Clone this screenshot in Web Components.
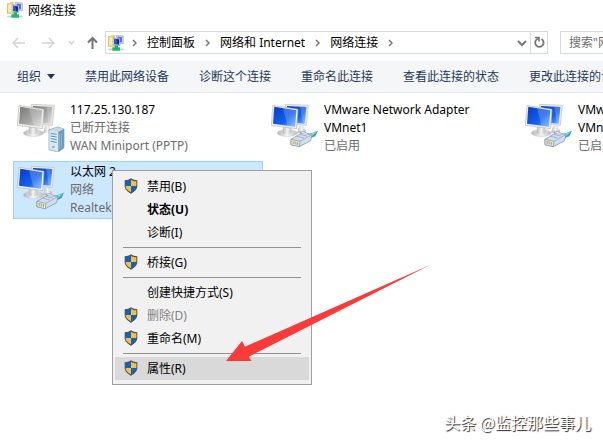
<!DOCTYPE html>
<html lang="zh-CN">
<head>
<meta charset="utf-8">
<title>网络连接</title>
<style>
    html, body {
        height: 100%;
        margin: 0;
    }
    body {
        background: #fff;
        color: #000;
        font: 12px/18px "Noto Sans", "Noto Sans CJK SC", sans-serif;
        overflow: hidden;
    }
</style>
</head>
<body>
<explorer-window>
    <title-bar>网络连接</title-bar>
    <nav-bar>
        <crumb-item>控制面板</crumb-item>
        <crumb-item>网络和 Internet</crumb-item>
        <crumb-item>网络连接</crumb-item>
    </nav-bar>
    <tool-bar>
        <tool-button menu>组织</tool-button>
        <tool-button>禁用此网络设备</tool-button>
        <tool-button>诊断这个连接</tool-button>
        <tool-button>重命名此连接</tool-button>
        <tool-button>查看此连接的状态</tool-button>
        <tool-button>更改此连接的设置</tool-button>
    </tool-bar>
    <connection-list>
        <connection-tile kind="wan" name="117.25.130.187" status="已断开连接" device="WAN Miniport (PPTP)"></connection-tile>
        <connection-tile name="VMware Network Adapter VMnet1" status="已启用"></connection-tile>
        <connection-tile name="VMware Network Adapter VMnet8" status="已启用"></connection-tile>
        <connection-tile selected name="以太网 2" status="网络" device="Realtek"></connection-tile>
    </connection-list>
    <context-menu slot="overlay">
        <menu-item shield>禁用(B)</menu-item>
        <menu-item default>状态(U)</menu-item>
        <menu-item>诊断(I)</menu-item>
        <menu-line></menu-line>
        <menu-item shield>桥接(G)</menu-item>
        <menu-line></menu-line>
        <menu-item>创建快捷方式(S)</menu-item>
        <menu-item shield disabled>删除(D)</menu-item>
        <menu-item shield>重命名(M)</menu-item>
        <menu-line></menu-line>
        <menu-item shield active>属性(R)</menu-item>
    </context-menu>
    <pointer-arrow slot="overlay"></pointer-arrow>
    <water-mark slot="overlay">头条 @监控那些事儿</water-mark>
</explorer-window>

<script>
const folderIcon = `
    <svg width="16" height="16" viewBox="0 0 48 48" aria-hidden="true">
        <path d="M1 5h6l3-3h9v32H1z" fill="#f4dc7c" stroke="#c8a84c" stroke-width="2"/>
        <path d="M4 8h12v23H4z" fill="#fbeeb0"/>
        <path d="M25 1l21 2v23l-18 1z" fill="#d9d9d4" stroke="#a9aaa6" stroke-width="2"/>
        <path d="M29 5l13 1v16l-13 1z" fill="#4a74e8"/>
        <path d="M15 8l20 3v21l-20-3z" fill="#e5e4dc" stroke="#969a9c" stroke-width="2"/>
        <path d="M18 11l15 2v16l-15-2z" fill="#1622a6"/>
        <path d="M18 11l7 1 3 16-10-1z" fill="#3558d8"/>
        <path d="M20 31h10v8H20z" fill="#18b45c"/>
        <path d="M1 41h46v5H1z" fill="#c9cdcf"/>
        <path d="M13 37h23v10H13z" fill="#12c063"/>
    </svg>`;

const shieldIcon = `
    <svg width="14" height="16" viewBox="0 0 42 48" aria-hidden="true">
        <path d="M21 1c5 4 12 6 19 6v17c0 10-8 17-19 23C10 41 2 34 2 24V7c7 0 14-2 19-6z" fill="#4d5660"/>
        <path d="M21 5v19H5V10c6 0 12-2 16-5z" fill="#0a63c9"/>
        <path d="M21 5c4 3 10 5 16 5v14H21z" fill="#ffbd3a"/>
        <path d="M5 24h16v19C11 38 5 32 5 24z" fill="#ffbd3a"/>
        <path d="M21 24h16c0 8-6 14-16 19z" fill="#0a63c9"/>
    </svg>`;

const plug = `
    <path d="M108 92l33-12-8 17-22 8z" fill="#2fa3cb"/>
    <path d="M112 92l26-10-15 14z" fill="#8ee1ee"/>
    <path d="M60 106l30-18 33 3-4 19-34 18-25-6z" fill="#d3deec" stroke="#7489a6" stroke-width="2"/>
    <path d="M60 106l27 6-2 16-25-6z" fill="#e9edf2" stroke="#7489a6" stroke-width="2"/>
    <path d="M64 111l18 4-1 8-16-4z" fill="#b5b060"/>
    <path d="M70 113v7M76 114v8" stroke="#fff3a8" stroke-width="2"/>
    <path d="M87 112l34-19M77 97l22 5M86 91l22 5" stroke="#8a9fbb" stroke-width="2"/>
    <path d="M92 88l-6-4 12-1 18 8" fill="#eef4fa" stroke="#7489a6" stroke-width="2"/>`;

const server = `
    <path d="M96 78l26-9 19 6v56l-17 13-28-7z" fill="#aac9dc" stroke="#7799af" stroke-width="2"/>
    <path d="M97 79l27 4v60l-27-7z" fill="#d8e9f2"/>
    <path d="M124 83l17-8v56l-17 12z" fill="#6c9aba"/>
    <path d="M97 79l25-9 18 5-16 8z" fill="#c3dae7"/>
    <path d="M101 88l18 3M101 96l18 3M101 104l18 3M101 112l18 3" stroke="#5c93b7" stroke-width="3"/>
    <path d="M128 91v44M134 87v43" stroke="#a7c9df" stroke-width="2"/>
    <circle cx="109" cy="129" r="4" fill="#88b7d2"/>`;

function computerIcon(kind) {
    const off = kind === 'wan';
    const id = off ? 'off' : 'on';
    const stops = off ? ['#777', '#a8a8a8', '#dcdcdc'] : ['#0838c8', '#1260ec', '#6fb4ff'];
    return `
        <svg width="48" height="48" viewBox="0 0 144 144" aria-hidden="true">
            <defs>
                <linearGradient id="${id}" x1="0" y1="0" x2="1" y2="1">
                    <stop offset="0" stop-color="${stops[0]}"/>
                    <stop offset=".6" stop-color="${stops[1]}"/>
                    <stop offset="1" stop-color="${stops[2]}"/>
                </linearGradient>
                <linearGradient id="base" x1="0" y1="0" x2="1" y2="0">
                    <stop offset="0" stop-color="#b4b4b4"/>
                    <stop offset=".5" stop-color="#f4f4f4"/>
                    <stop offset="1" stop-color="#bcbcbc"/>
                </linearGradient>
            </defs>
            <path d="M84 66l12-2 4 11c8 3 6 11-4 11l-18 2z" fill="url(#base)"/>
            <path d="M43 1l69 3-6 60-60-4z" fill="#ecebe8" stroke="#bdbcb8" stroke-width="2"/>
            <path d="M48 6l58 3-5 50-52-4z" fill="url(#${id})"/>
            <path d="M88 8l18 1-5 50-6-1z" fill="#fff" fill-opacity=".2"/>
            <ellipse cx="49" cy="87" rx="30" ry="11" fill="url(#base)" stroke="#c4c4c4" stroke-width="1"/>
            <path d="M36 66l24 3 2 17c-6 5-20 5-27 1z" fill="url(#base)"/>
            <path d="M6 4l75 12-4 58-76-10z" fill="#f3f2ef" stroke="#b4b3b0" stroke-width="2"/>
            <path d="M10 8l66 11-4 49-66-9z" fill="url(#${id})"/>
            <path d="M36 13l40 6-4 49-22-3z" fill="#fff" fill-opacity=".2"/>
            ${off ? server : plug}
        </svg>`;
}

class BaseElement extends HTMLElement {
    constructor() {
        super();
        this.attachShadow({ mode: 'open' });
    }

    connectedCallback() {
        this.shadowRoot.innerHTML = this.render();
    }
}

class ExplorerWindow extends BaseElement {
    render() {
        return `
            <style>
                :host {
                    display: flex;
                    flex-direction: column;
                    position: relative;
                    min-height: 100%;
                    overflow: hidden;
                }
            </style>
            <slot></slot>
            <slot name="overlay"></slot>
        `;
    }
}

class TitleBar extends BaseElement {
    render() {
        return `
            <style>
                :host {
                    display: flex;
                    align-items: center;
                    gap: 5px;
                    height: 22px;
                    padding: 0 7px;
                }
                svg {
                    margin-bottom: 2px;
                }
            </style>
            ${folderIcon}
            <span><slot></slot></span>
        `;
    }
}

class NavBar extends BaseElement {
    render() {
        return `
            <style>
                :host {
                    display: flex;
                    align-items: center;
                    height: 23px;
                    padding: 9px 0 7px 12px;
                }
                button {
                    display: flex;
                    padding: 0;
                    border: 0;
                    background: none;
                }
                svg {
                    flex: none;
                }
                .history {
                    display: flex;
                    align-items: center;
                    gap: 13px;
                    margin-right: 7px;
                }
                .history button:first-child {
                    margin-right: 4px;
                }
                .history button:last-child {
                    margin-left: -1px;
                }
                .address {
                    box-sizing: border-box;
                    display: flex;
                    align-items: center;
                    flex: 1;
                    height: 23px;
                    padding-left: 2px;
                    border: 1px solid #d9d9d9;
                }
                .place {
                    display: flex;
                    align-items: center;
                    gap: 8px;
                }
                .drop {
                    margin: 0 3px 0 auto;
                }
                .refresh {
                    align-items: center;
                    justify-content: center;
                    width: 17px;
                    height: 21px;
                    border-left: 1px solid #d9d9d9;
                }
                .search {
                    box-sizing: border-box;
                    flex: 0 0 43px;
                    height: 23px;
                    margin-left: 12px;
                    border: 1px solid #d9d9d9;
                    border-right: 0;
                    overflow: hidden;
                }
                input {
                    box-sizing: border-box;
                    width: 200px;
                    height: 21px;
                    padding: 0 8px;
                    border: 0;
                    font: inherit;
                }
                input::placeholder {
                    color: #6d6d6d;
                }
            </style>
            <div class="history">
                <button aria-label="后退"><svg width="13" height="12" viewBox="0 0 13 12"><path d="M1 6h12M6 1L1 6l5 5" fill="none" stroke="#d4d4d4" stroke-width="1.5"/></svg></button>
                <button aria-label="前进"><svg width="13" height="12" viewBox="0 0 13 12"><path d="M0 6h12M7 1l5 5-5 5" fill="none" stroke="#d4d4d4" stroke-width="1.5"/></svg></button>
                <button aria-label="最近浏览的位置"><svg width="7" height="6" viewBox="0 0 7 6"><path d="M1 1l2.5 3L6 1" fill="none" stroke="#d4d4d4" stroke-width="1.5"/></svg></button>
                <button aria-label="上移"><svg width="11" height="13" viewBox="0 0 11 13"><path d="M5.5 13V2M1 6.500L5.500 2 10 6.500" fill="none" stroke="#757575" stroke-width="2"/></svg></button>
            </div>
            <div class="address">
                <div class="place">
                    ${folderIcon}
                    <svg width="5" height="8" viewBox="0 0 5 8" aria-hidden="true"><path d="M1 1l3 3-3 3" fill="none" stroke="#777" stroke-width="1.5"/></svg>
                </div>
                <slot></slot>
                <button class="drop" aria-label="以前的位置"><svg width="10" height="8" viewBox="0 0 10 8"><path d="M1 2l4 4 4-4" fill="none" stroke="#777" stroke-width="2"/></svg></button>
                <button class="refresh" aria-label="刷新"><svg width="11" height="13" viewBox="0 0 11 13"><path d="M7.500 3A4.200 4.200 0 1 1 2.500 3.600L5 2" fill="none" stroke="#777" stroke-width="1.8"/><path d="M1 1.500h4v4" fill="none" stroke="#777" stroke-width="1.6"/></svg></button>
            </div>
            <div class="search"><input type="text" aria-label="搜索" placeholder='搜索"网络连接"'></div>
        `;
    }
}

class CrumbItem extends BaseElement {
    render() {
        return `
            <style>
                :host {
                    display: flex;
                    align-items: center;
                    gap: 10px;
                    padding-left: 10px;
                    white-space: nowrap;
                }
                a {
                    color: inherit;
                    text-decoration: none;
                }
            </style>
            <a href="#"><slot></slot></a>
            <svg width="5" height="8" viewBox="0 0 5 8" aria-hidden="true"><path d="M1 1l3 3-3 3" fill="none" stroke="#777" stroke-width="1.5"/></svg>
        `;
    }
}

class ToolBar extends BaseElement {
    render() {
        return `
            <style>
                :host {
                    display: flex;
                    align-items: center;
                    gap: 30px;
                    height: 31px;
                    padding-left: 17px;
                    background: #f5f6f7;
                    border-bottom: 1px solid #e5e6e7;
                    overflow: hidden;
                }
            </style>
            <slot></slot>
        `;
    }
}

class ToolButton extends BaseElement {
    render() {
        const caret = this.hasAttribute('menu')
            ? '<svg width="8" height="5" viewBox="0 0 8 5" aria-hidden="true"><path d="M0 0h8L4 5z" fill="#1e395b"/></svg>'
            : '';
        return `
            <style>
                :host {
                    display: block;
                    flex: none;
                }
                button {
                    display: flex;
                    align-items: center;
                    gap: 6px;
                    padding: 0;
                    border: 0;
                    background: none;
                    color: #1e395b;
                    font: inherit;
                    white-space: nowrap;
                }
            </style>
            <button><slot></slot>${caret}</button>
        `;
    }
}

class ConnectionList extends BaseElement {
    render() {
        return `
            <style>
                :host {
                    display: grid;
                    grid-template-columns: repeat(3, 250px);
                    gap: 4px;
                    align-content: start;
                    padding: 6px 0 0 13px;
                    overflow: hidden;
                }
            </style>
            <slot></slot>
        `;
    }
}

class ConnectionTile extends BaseElement {
    render() {
        const device = this.getAttribute('device');
        return `
            <style>
                :host {
                    box-sizing: border-box;
                    display: flex;
                    gap: 5px;
                    height: 58px;
                    padding: 1px 3px 0;
                    border: 1px solid transparent;
                }
                :host([selected]) {
                    background: #cce8ff;
                    border-color: #99d1ff;
                }
                svg {
                    flex: none;
                    margin-top: 3px;
                }
                .text {
                    width: 172px;
                }
                .sub {
                    color: #6d6d6d;
                }
            </style>
            ${computerIcon(this.getAttribute('kind'))}
            <div class="text">
                <div>${this.getAttribute('name')}</div>
                <div class="sub">${this.getAttribute('status')}</div>
                ${device ? `<div class="sub">${device}</div>` : ''}
            </div>
        `;
    }
}

class ContextMenu extends BaseElement {
    render() {
        return `
            <style>
                :host {
                    box-sizing: border-box;
                    position: absolute;
                    left: 112px;
                    top: 170px;
                    width: 200px;
                    padding: 4px 2px;
                    background: #f1f1f1;
                    border: 1px solid #a0a0a0;
                }
            </style>
            <div role="menu"><slot></slot></div>
        `;
    }
}

class MenuItem extends BaseElement {
    render() {
        return `
            <style>
                :host {
                    display: block;
                }
                button {
                    display: grid;
                    grid-template-columns: 14px 1fr;
                    gap: 9px;
                    align-items: center;
                    width: 100%;
                    height: 23px;
                    padding: 0 9px;
                    border: 0;
                    background: none;
                    color: #000;
                    font: inherit;
                    text-align: left;
                }
                :host([default]) button {
                    font-weight: bold;
                }
                :host([disabled]) button {
                    color: #838383;
                }
                :host([active]) button {
                    background: #d9d9d9;
                }
                svg {
                    margin-bottom: 2px;
                }
            </style>
            <button role="menuitem" ${this.hasAttribute('disabled') ? 'disabled' : ''}>
                ${this.hasAttribute('shield') ? shieldIcon : '<i></i>'}
                <span><slot></slot></span>
            </button>
        `;
    }
}

class MenuLine extends BaseElement {
    render() {
        return `
            <style>
                :host {
                    display: block;
                    height: 1px;
                    margin: 3px 8px;
                    background: #919191;
                }
            </style>
        `;
    }
}

class PointerArrow extends BaseElement {
    render() {
        return `
            <style>
                :host {
                    position: absolute;
                    left: 226px;
                    top: 265px;
                    pointer-events: none;
                }
                svg {
                    display: block;
                }
            </style>
            <svg width="204" height="97" viewBox="0 0 612 291" aria-hidden="true">
                <path d="M0 288L48 228l9 17L612 0 68 275l9 13z" fill="#fc3a3a"/>
            </svg>
        `;
    }
}

class WaterMark extends BaseElement {
    render() {
        return `
            <style>
                :host {
                    position: absolute;
                    right: 12px;
                    bottom: 8px;
                    color: #fff;
                    font-family: "Noto Sans CJK SC", sans-serif;
                    font-size: 16px;
                    line-height: 24px;
                    text-shadow: 1px 1px 1px #222;
                }
            </style>
            <slot></slot>
        `;
    }
}

customElements.define('explorer-window', ExplorerWindow);
customElements.define('title-bar', TitleBar);
customElements.define('nav-bar', NavBar);
customElements.define('crumb-item', CrumbItem);
customElements.define('tool-bar', ToolBar);
customElements.define('tool-button', ToolButton);
customElements.define('connection-list', ConnectionList);
customElements.define('connection-tile', ConnectionTile);
customElements.define('context-menu', ContextMenu);
customElements.define('menu-item', MenuItem);
customElements.define('menu-line', MenuLine);
customElements.define('pointer-arrow', PointerArrow);
customElements.define('water-mark', WaterMark);
</script>
</body>
</html>
